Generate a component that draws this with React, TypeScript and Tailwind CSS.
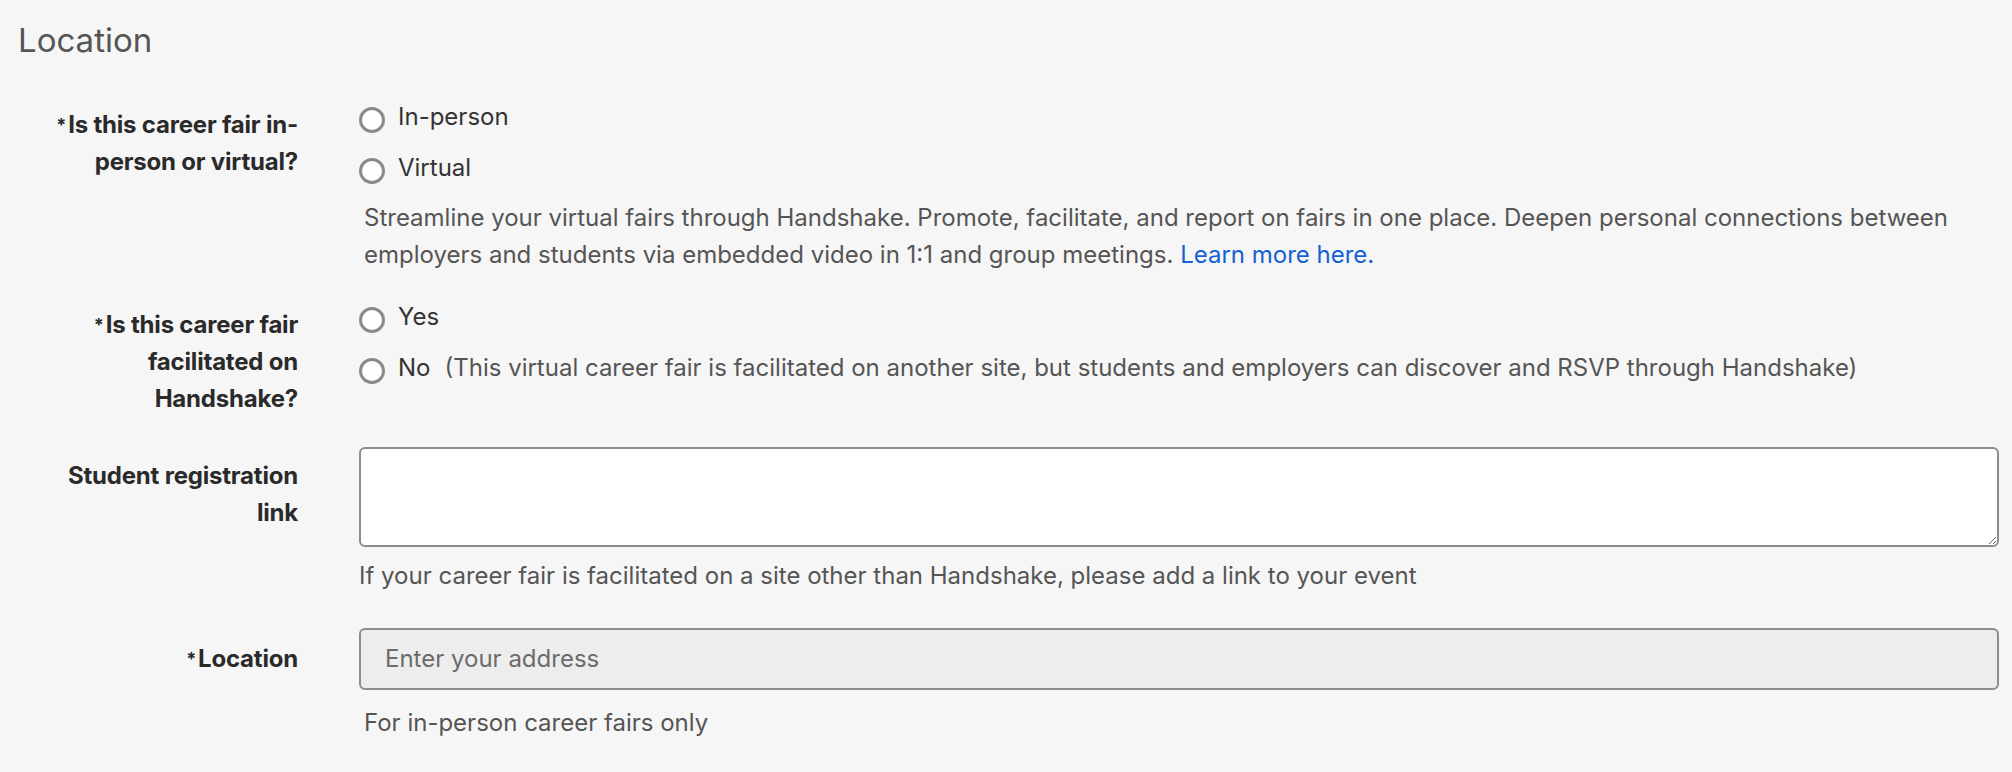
function Radio({ label, extra }: { label: string; extra?: string }) {
  return (
    <label className="flex h-[51px] items-center">
      <span className="mt-[6px] inline-block h-[26px] w-[26px] shrink-0 rounded-full border-[3px] border-[#8a8a8e] bg-white" />
      <span className="ml-[13px] text-[#333]">{label}</span>
      {extra && <span className="ml-[14px] text-[#555]">{extra}</span>}
    </label>
  );
}

function Label({ children, required }: { children: React.ReactNode; required?: boolean }) {
  return (
    <div className="w-[298px] shrink-0 pl-[28px] text-right text-[24px] font-bold leading-[37px] tracking-[-0.2px] text-[#2a2a2a]">
      {required && <span className="mr-[2px] align-top text-[18px]">*</span>}
      {children}
    </div>
  );
}

export default function App() {
  return (
    <div
      className="min-h-[772px] bg-[#f6f6f6] text-[24px] text-[#555]"
      style={{ fontFamily: 'Inter, "Noto Sans", sans-serif' }}
    >
      <div className="px-[18px] pt-[16px] text-[33px] text-[#555]">Location</div>

      <div className="mt-[40px] flex">
        <Label required>Is this career fair in-person or virtual?</Label>
        <div className="-mt-[14px] ml-[61px] flex-1">
          <Radio label="In-person" />
          <Radio label="Virtual" />
          <p className="ml-[5px] mt-[5px] pr-[60px] leading-[37px] text-[#555]">
            Streamline your virtual fairs through Handshake. Promote, facilitate, and report on fairs in one place. Deepen personal connections between employers and students via embedded video in 1:1 and group meetings.{' '}
            <a className="text-[#1560d4]">Learn more here.</a>
          </p>
        </div>
      </div>

      <div className="mt-[33px] flex">
        <Label required>
          Is this career fair
          <br />
          facilitated on
          <br />
          Handshake?
        </Label>
        <div className="-mt-[14px] ml-[61px] flex-1">
          <Radio label="Yes" />
          <Radio
            label="No"
            extra="(This virtual career fair is facilitated on another site, but students and employers can discover and RSVP through Handshake)"
          />
        </div>
      </div>

      <div className="mt-[30px] flex">
        <div className="pt-[10px]">
          <Label>Student registration link</Label>
        </div>
        <div className="ml-[61px] mr-[13px] flex-1">
          <textarea className="block h-[100px] w-full resize-y rounded-[6px] border-2 border-[#8d8d8d] bg-white" />
          <p className="mt-[10px] leading-[37px]">
            If your career fair is facilitated on a site other than Handshake, please add a link to your event
          </p>
        </div>
      </div>

      <div className="mt-[34px] flex">
        <div className="flex h-[62px] items-center">
          <Label required>Location</Label>
        </div>
        <div className="ml-[61px] mr-[13px] flex-1">
          <input
            placeholder="Enter your address"
            className="block h-[62px] w-full rounded-[6px] border-2 border-[#8d8d8d] bg-[#ededed] px-[24px] text-[24px] placeholder:text-[#6b6b6b]"
          />
          <p className="ml-[5px] mt-[14px] leading-[37px]">For in-person career fairs only</p>
        </div>
      </div>
    </div>
  );
}
